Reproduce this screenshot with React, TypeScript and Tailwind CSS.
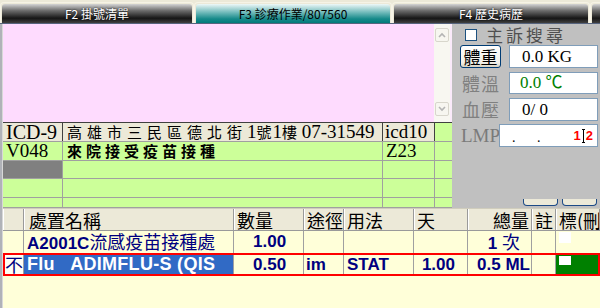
import React from 'react';

const serif = "font-['Liberation_Serif','Noto_Sans_CJK_TC',serif]";
const cjk = "font-['Noto_Sans_CJK_TC','Liberation_Sans',sans-serif]";
const sans = "font-['Liberation_Sans','Noto_Sans_CJK_TC',sans-serif]";

const cols = ['w-[21px]', 'w-[210px]', 'w-[70px]', 'w-[40px]', 'w-[70px]', 'w-[54px]', 'w-[64px]', 'w-[24px]', 'w-[44px]'];

const Tab: React.FC<{ label: string; active?: boolean; w: string }> = ({ label, active, w }) => (
  <div
    className={`${w} shrink-0 h-[21px] rounded-t-[4px] border border-b-0 border-[#f6f3e6] p-[1px] pb-0`}
  >
    <div
      className={
        active
          ? 'h-full rounded-t-[3px] bg-[linear-gradient(#eef8f8,#7cc0c0_40%,#168a8a_78%,#007a7a)] text-black text-center text-[12px] leading-[19px]'
          : 'h-full rounded-t-[3px] bg-[linear-gradient(#d4d4d4,#6c6c6c_35%,#161616_75%,#404040)] text-white text-center text-[12px] leading-[19px] [text-shadow:0_0_2px_#000]'
      }
    >
      <span className={cjk}>{label}</span>
    </div>
  </div>
);

const Field: React.FC<{ children?: React.ReactNode; cls?: string }> = ({ children, cls }) => (
  <div className={`h-full bg-white border border-[#7f9db9] flex items-center ${cls ?? ''}`}>{children}</div>
);

const Chevron: React.FC<{ up?: boolean }> = ({ up }) => (
  <div className="w-[14px] h-[14px] rounded-[2px] border border-[#d8d6cc] bg-[#f7f6f0] flex items-center justify-center">
    <svg width="8" height="6" viewBox="0 0 8 6">
      <path d={up ? 'M1 5 L4 2 L7 5' : 'M1 1 L4 4 L7 1'} stroke="#b4b4b4" strokeWidth="1.6" fill="none" />
    </svg>
  </div>
);

const IcdRow: React.FC<{ a?: React.ReactNode; b?: React.ReactNode; c?: React.ReactNode; h: string; gray?: boolean }> = ({ a, b, c, h, gray }) => (
  <div className={`flex ${h} border-b border-[#a0a0a0] bg-[#ccff99] overflow-hidden`}>
    <div className={`w-[60px] shrink-0 border-r border-[#a0a0a0] ${gray ? 'bg-[#808080]' : ''} pl-[3px] ${serif} text-[19px] leading-[18px]`}>{a}</div>
    <div className={`w-[320px] shrink-0 border-r border-[#a0a0a0] pl-[4px] ${cjk} font-bold text-[15px] tracking-[4px] leading-[18px]`}>{b}</div>
    <div className={`w-[52px] shrink-0 border-r border-[#a0a0a0] pl-[3px] ${serif} text-[19px] leading-[18px]`}>{c}</div>
    <div className="flex-1" />
  </div>
);

const HeadCell: React.FC<{ i: number; children?: React.ReactNode; right?: boolean }> = ({ i, children, right }) => (
  <div
    className={`${cols[i]} shrink-0 border-l border-white border-r border-r-[#9a9a9a] px-[2px] overflow-hidden whitespace-nowrap ${right ? 'text-right' : ''}`}
  >
    {children}
  </div>
);

export default function App() {
  return (
    <div className={`w-[600px] h-[308px] overflow-hidden bg-[#ece9d8] flex flex-col ${sans}`}>
      {/* tabs */}
      <div className="h-[23px] flex items-end shrink-0">
        <Tab w="w-[194px]" label="F2 掛號清單" />
        <div className="w-[2px]" />
        <Tab w="w-[198px]" label="F3 診療作業/807560" active />
        <div className="w-[2px]" />
        <Tab w="w-[198px]" label="F4 歷史病歷" />
        <div className="w-[2px]" />
        <Tab w="w-[20px]" label="" />
      </div>

      <div className="flex-1 flex border-t border-[#56647e] min-h-0">
        <div className="w-[3px] shrink-0 bg-[#b0b2b8] border-r border-[#d8d8d8]" />
        <div className="flex-1 flex flex-col min-w-0">
          {/* top section */}
          <div className="h-[184px] flex shrink-0">
            <div className="w-[449px] shrink-0 flex flex-col">
              <div className="h-[98px] flex bg-[#fedbfe] border-r-[2px] border-[#fbeafb]">
                <div className="flex-1" />
                <div className="w-[16px] bg-[#f8f7f1] flex flex-col items-center justify-between pt-[4px] pb-[6px]">
                  <Chevron up />
                  <Chevron />
                </div>
              </div>
              <div className="flex-1 flex flex-col border-t border-[#404040] bg-[#ccff99] overflow-hidden">
                <div className="flex h-[19px] border-b border-[#a0a0a0] shrink-0 overflow-hidden">
                  <div className={`w-[60px] shrink-0 bg-[#ece9d8] border-r border-[#404040] pl-[3px] ${serif} text-[20px] leading-[18px]`}>ICD-9</div>
                  <div className="w-[320px] shrink-0 bg-[#ece9d8] border-r border-[#404040] pl-[4px] whitespace-nowrap overflow-hidden leading-[18px]">
                    <span className={`${cjk} text-[15px] tracking-[5px]`}>高雄市三民區德北街</span>
                    <span className={`${serif} text-[19px]`}>1</span>
                    <span className={`${cjk} text-[15px] tracking-[1px]`}>號</span>
                    <span className={`${serif} text-[19px]`}>1</span>
                    <span className={`${cjk} text-[15px]`}>樓</span>
                    <span className={`${serif} text-[19px]`}> 07-31549</span>
                  </div>
                  <div className={`w-[52px] shrink-0 bg-[#ece9d8] border-r border-[#404040] pl-[2px] ${serif} text-[19px] leading-[18px]`}>icd10</div>
                  <div className="flex-1" />
                </div>
                <IcdRow h="h-[19px]" a="V048" b="來院接受疫苗接種" c="Z23" />
                <IcdRow h="h-[19px]" gray />
                <IcdRow h="h-[19px]" />
                <IcdRow h="h-[10px]" />
              </div>
            </div>

            {/* right panel */}
            <div className="flex-1 bg-[#c0c0c0] flex flex-col pl-[8px] pr-[2px]">
              <div className="mt-[4px] h-[14px] flex items-center">
                <div className="ml-[5px] w-[12px] h-[12px] bg-white border border-[#1c5180]" />
                <span className={`ml-[9px] ${cjk} text-[17px] tracking-[3px] text-[#505050] leading-[14px]`}>主訴搜尋</span>
              </div>
              <div className="mt-[3px] h-[23px] flex">
                <div className={`w-[41px] h-[23px] rounded-[3px] border border-[#003c74] bg-[linear-gradient(#ffffff,#f0efe8_80%,#d6d0c0)] flex items-center justify-center ${cjk} text-[17px] text-black`}>體重</div>
                <div className="ml-[8px] flex-1">
                  <Field cls={`pl-[12px] ${serif} text-[17px] text-black`}>0.0 KG</Field>
                </div>
              </div>
              <div className="mt-[4px] h-[22px] flex">
                <div className={`w-[49px] ${cjk} text-[18px] tracking-[1px] text-[#808080] leading-[22px] pl-[2px]`}>體溫</div>
                <div className="flex-1">
                  <Field cls={`pl-[10px] ${serif} text-[17px] text-[#008000]`}>0.0 ℃</Field>
                </div>
              </div>
              <div className="mt-[4px] h-[23px] flex">
                <div className={`w-[49px] ${cjk} text-[18px] tracking-[1px] text-[#808080] leading-[23px] pl-[2px]`}>血壓</div>
                <div className="flex-1">
                  <Field cls={`pl-[12px] ${serif} text-[17px] text-black`}>0/ 0</Field>
                </div>
              </div>
              <div className="mt-[3px] h-[23px] flex">
                <div className={`w-[39px] ${serif} text-[19px] text-[#7a7a7a] leading-[23px] pl-[1px]`}>LMP</div>
                <div className="flex-1">
                  <Field cls="pl-[12px] pr-[4px] justify-between">
                    <span className={`${serif} text-[14px] text-black tracking-[9px] mt-[4px]`}>. .</span>
                    <span className="flex items-center text-[13px] font-bold text-[#ff0000]">
                      1
                      <span className="mx-[1px] w-[3px] h-[14px] flex flex-col items-center justify-between">
                        <span className="w-[3px] h-[1px] bg-black" />
                        <span className="w-[1px] flex-1 bg-black" />
                        <span className="w-[3px] h-[1px] bg-black" />
                      </span>
                      2
                    </span>
                  </Field>
                </div>
              </div>
              <div className="flex-1" />
              <div className="flex justify-end gap-[4px] mb-[2px] pr-[1px]">
                <div className="w-[35px] h-[7px] rounded-b-[4px] border border-t-0 border-[#1c4a86] bg-[#ece9d8]" />
                <div className="w-[35px] h-[7px] rounded-b-[4px] border border-t-0 border-[#1c4a86] bg-[#ece9d8]" />
              </div>
            </div>
          </div>

          {/* bottom table */}
          <div className="flex-1 bg-[#ffffd9] flex flex-col">
            <div className={`flex h-[23px] bg-[#ece9d8] border-t border-[#d0cdbd] border-b border-b-[#9a9a9a] ${cjk} text-[18px] leading-[22px] text-black`}>
              <HeadCell i={0} />
              <HeadCell i={1}>
                <span className="pl-[2px]">處置名稱</span>
              </HeadCell>
              <HeadCell i={2}>數量</HeadCell>
              <HeadCell i={3}>途徑</HeadCell>
              <HeadCell i={4}>用法</HeadCell>
              <HeadCell i={5}>天</HeadCell>
              <HeadCell i={6} right>總量</HeadCell>
              <HeadCell i={7}>註</HeadCell>
              <HeadCell i={8}>標(刪除</HeadCell>
            </div>

            <div className="flex h-[22px] text-[#000080] text-[17px] font-bold leading-[22px]">
              <div className={`${cols[0]} border-r border-[#a0a0a0]`} />
              <div className={`${cols[1]} border-r border-[#a0a0a0] pl-[3px] whitespace-nowrap overflow-hidden`}>
                A2001C<span className={`${cjk} font-normal text-[18px] leading-[20px]`}>流感疫苗接種處</span>
              </div>
              <div className={`${cols[2]} border-r border-[#a0a0a0] pl-[19px]`}>1.00</div>
              <div className={`${cols[3]} border-r border-[#a0a0a0]`} />
              <div className={`${cols[4]} border-r border-[#a0a0a0]`} />
              <div className={`${cols[5]} border-r border-[#a0a0a0]`} />
              <div className={`${cols[6]} border-r border-[#a0a0a0] text-right pr-[11px] whitespace-nowrap`}>
                1 <span className={`${cjk} font-normal text-[18px] leading-[20px]`}>次</span>
              </div>
              <div className={`${cols[7]} border-r border-[#a0a0a0]`} />
              <div className={`${cols[8]} pl-[3px] pt-[1px]`}>
                <div className="w-[12px] h-[11px] bg-white" />
              </div>
            </div>

            <div className="flex h-[23px] border-2 border-[#ff0000] text-[#000080] text-[17px] font-bold leading-[19px]">
              <div className={`w-[19px] border-r border-[#a0a0a0] bg-[#fffff4] ${cjk} font-normal text-[18px] text-center`}>不</div>
              <div className={`${cols[1]} bg-[#316ac5] text-white text-[18px] tracking-[0.3px] pl-[3px] whitespace-pre overflow-hidden border-r border-[#a0a0a0]`}>Flu   ADIMFLU-S (QIS</div>
              <div className={`${cols[2]} border-r border-[#a0a0a0] pl-[19px]`}>0.50</div>
              <div className={`${cols[3]} border-r border-[#a0a0a0] pl-[2px]`}>im</div>
              <div className={`${cols[4]} border-r border-[#a0a0a0] pl-[3px]`}>STAT</div>
              <div className={`${cols[5]} border-r border-[#a0a0a0] text-right pr-[12px]`}>1.00</div>
              <div className={`${cols[6]} border-r border-[#a0a0a0] text-right pr-[1px] whitespace-nowrap`}>0.5 ML</div>
              <div className={`${cols[7]} border-r border-[#a0a0a0]`} />
              <div className="w-[42px] bg-[#008000] pl-[3px] pt-[1px]">
                <div className="w-[12px] h-[9px] bg-white" />
              </div>
            </div>
            <div className="flex-1" />
          </div>
        </div>
      </div>
    </div>
  );
}
